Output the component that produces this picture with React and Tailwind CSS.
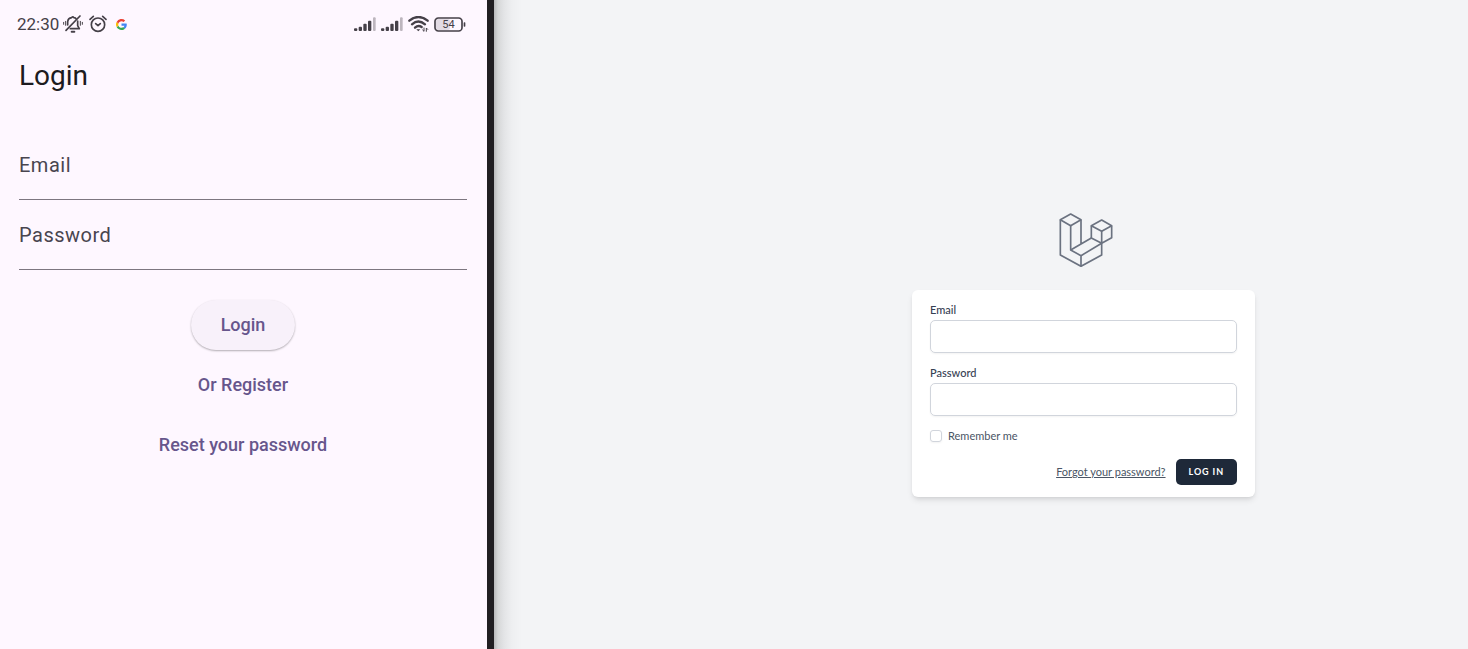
import React from 'react';

const BellOffIcon = () => (
    <svg viewBox="0 0 60 54" className="w-5 h-[18px]" fill="none" stroke="#454048" strokeWidth="5" strokeLinecap="round" strokeLinejoin="round" aria-hidden="true">
        <path d="M14 30V21a14 14 0 0 1 12-13q3-5 7 0 3 0 6 3" />
        <path d="M44 18v14l5 9H22" />
        <path d="M51 3 9 46" />
        <path d="M26 50h8" strokeWidth="6" />
        <path d="M8 19v12M2 22v6M52 19v12M58 22v6" strokeWidth="3" />
    </svg>
);

const AlarmIcon = () => (
    <svg viewBox="0 0 54 54" className="w-[18px] h-[18px]" fill="none" stroke="#454048" strokeWidth="5" strokeLinecap="round" strokeLinejoin="round" aria-hidden="true">
        <circle cx="27" cy="29" r="20" />
        <path d="M20 26l7 6 7-6" />
        <path d="M3 13 13 4M51 13 41 4" />
    </svg>
);

const GoogleIcon = () => (
    <svg viewBox="0 0 24 24" className="w-[11px] h-[11px]" aria-hidden="true">
        <path fill="#4285F4" d="M23 10H12v4.6h6.4c-.5 1.6-1.3 2.8-2.6 3.7l3.8 3C22 19 23.5 16 23.5 12.3c0-.8-.1-1.6-.5-2.3z" />
        <path fill="#34A853" d="M12 24c3.2 0 5.8-1 7.7-2.8l-3.9-3c-1 .7-2.3 1.1-3.8 1.1-3 0-5.600-2-6.600-4.800l-4 3.100C3.400 21.400 7.400 24 12 24z" />
        <path fill="#FBBC05" d="M5.4 14.5a7.3 7.3 0 0 1 0-5l-4-3a12 12 0 0 0 0 11z" />
        <path fill="#EA4335" d="M12 4.7c1.8 0 3.3.6 4.6 1.8L20 3.1A12 12 0 0 0 1.4 6.5l4 3.1C6.4 6.7 9 4.7 12 4.7z" />
    </svg>
);

const SignalIcon = () => (
    <svg viewBox="0 0 66 42" className="w-[22px] h-3.5" fill="#454048" aria-hidden="true">
        <rect x="0" y="34" width="10" height="8" rx="3" />
        <rect x="14" y="29" width="10" height="13" rx="3" />
        <rect x="28" y="20" width="10" height="22" rx="3" />
        <rect x="42" y="11" width="10" height="31" rx="3" />
        <rect x="57" y="1" width="8" height="41" rx="3" fill="#bdb6be" />
    </svg>
);

const WifiIcon = () => (
    <svg viewBox="0 0 63 48" className="w-[21px] h-4" fill="none" stroke="#454048" strokeWidth="7" strokeLinecap="round" aria-hidden="true">
        <path d="M4 14Q31-8 59 14" />
        <path d="M12 25Q31 8 51 25" />
        <path d="M21 35Q31 26 41 33" />
        <path d="M25 40h12l-6 6z" fill="#454048" stroke="none" />
        <path d="M48 36v10l-4-4M55 46V36l4 4" strokeWidth="3" />
    </svg>
);

const Battery = ({ level }) => (
    <div className="relative flex items-center justify-center w-8 h-[15px] pr-[3px] text-[11px] leading-none text-[#454048]">
        <svg viewBox="0 0 96 45" className="absolute inset-0 w-full h-full" aria-hidden="true">
            <rect x="6" y="6" width="42" height="33" rx="6" fill="#e2dbe4" />
            <rect x="3" y="3" width="81" height="39" rx="10" fill="none" stroke="#454048" strokeWidth="5" />
            <rect x="89" y="16" width="5" height="13" rx="2" fill="#454048" />
        </svg>
        <span className="relative">{level}</span>
    </div>
);

const LaravelLogo = () => (
    <svg viewBox="0 0 162 162" className="w-[54px] h-[54px]" fill="none" stroke="#6b7280" strokeWidth="5" strokeLinejoin="round" role="img" aria-label="Laravel">
        <path d="M4 20 35 3l31 17-31 18z" />
        <path d="M4 20v106l62 34 62-34V91" />
        <path d="M35 38v73l31 17v32" />
        <path d="M66 20v73M35 111l62-36M66 128l62-37" />
        <path d="M97 38l31-17 30 17-30 17z" />
        <path d="M97 38v37l31 16 30-17V38M128 55v36" />
    </svg>
);

const MobileField = ({ id, label, type }) => (
    <div className="relative h-[70px] border-b border-[#7d7680]">
        <input id={id} type={type} className="w-full h-full pt-4 bg-transparent text-xl outline-none" />
        <label htmlFor={id} className="absolute left-0 top-5 text-xl leading-[30px] tracking-wide text-[#49454f] pointer-events-none">
            {label}
        </label>
    </div>
);

const WebField = ({ id, label, type }) => (
    <div>
        <label htmlFor={id} className="block text-[11px] leading-4 font-medium text-gray-700">{label}</label>
        <input id={id} type={type} className="block mt-0.5 w-full h-[33px] px-2 text-xs rounded-[5px] border border-gray-300 shadow-xs" />
    </div>
);

const MobileLogin = () => (
    <section className="w-[34%] max-w-[494px] shrink-0 bg-[#fef7ff] border-r-[7px] border-[#211f22] font-[Roboto,sans-serif]">
        <header className="flex items-center justify-between h-12 pl-[17px] pr-[21px] text-[#454048]">
            <div className="flex items-center">
                <span className="text-[17px] leading-6 mr-1">22:30</span>
                <BellOffIcon />
                <span className="ml-1.5 mr-[9px]"><AlarmIcon /></span>
                <GoogleIcon />
            </div>
            <div className="flex items-center gap-[5px]">
                <SignalIcon />
                <SignalIcon />
                <WifiIcon />
                <Battery level={54} />
            </div>
        </header>

        <h1 className="px-[19px] mt-2 text-[28px] leading-10 text-[#1d1b20]">Login</h1>

        <form className="pr-5 pl-[19px] mt-[34px]" onSubmit={(e) => e.preventDefault()}>
            <MobileField id="mobile-email" label="Email" type="email" />
            <MobileField id="mobile-password" label="Password" type="password" />
            <div className="flex flex-col items-center mt-[30px] text-lg leading-6 font-medium text-[#67568c]">
                <button type="submit" className="h-[50px] px-[30px] rounded-full bg-[#f8f1fa] shadow-[0_1px_2px_rgba(0,0,0,0.3)]">Login</button>
                <button type="button" className="mt-[23px]">Or Register</button>
                <button type="button" className="mt-9">Reset your password</button>
            </div>
        </form>
    </section>
);

const WebLogin = () => (
    <main className="flex-1 flex flex-col items-center pt-[213px] pl-[205px] bg-[linear-gradient(to_right,#b9babb,#d6d7d8_4px,#e3e4e6_10px,#eeeff1_18px,#f3f4f6_28px)] font-[Lato,sans-serif]">
        <a href="/" className="ml-1"><LaravelLogo /></a>

        <form className="w-full max-w-[343px] mt-[23px] px-[18px] py-3 rounded-md bg-white shadow-md" onSubmit={(e) => e.preventDefault()}>
            <WebField id="email" label="Email" type="email" />
            <div className="mt-3">
                <WebField id="password" label="Password" type="password" />
            </div>
            <label className="flex items-center gap-1.5 mt-3 text-[11px] leading-4 text-gray-600">
                <input type="checkbox" className="appearance-none w-3 h-3 rounded-[3px] border border-gray-300 shadow-xs checked:bg-gray-800" />
                Remember me
            </label>
            <div className="flex items-center justify-end gap-2.5 mt-[15px]">
                <a href="#forgot" className="text-[11px] leading-4 text-gray-600 underline">Forgot your password?</a>
                <button type="submit" className="h-[26px] px-[13px] rounded-[5px] bg-gray-800 text-white text-[9px] font-bold uppercase tracking-widest">Log in</button>
            </div>
        </form>
    </main>
);

const App = () => {
    return (
        <div className="min-h-screen flex bg-[#f3f4f6]">
            <MobileLogin />
            <WebLogin />
        </div>
    );
};

export default App;
